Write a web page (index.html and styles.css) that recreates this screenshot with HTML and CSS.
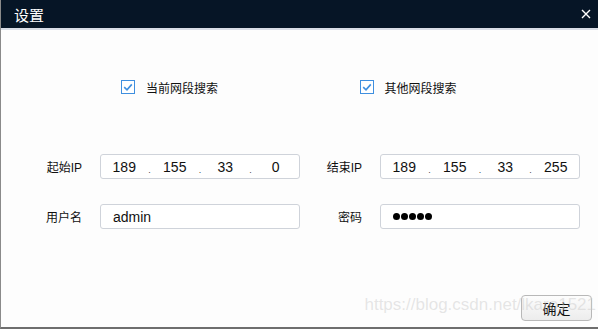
FILE: index.html
```html
<!DOCTYPE html>
<html lang="zh-CN">
<head>
    <meta charset="UTF-8">
    <meta name="viewport" content="width=device-width, initial-scale=1.0">
    <link rel="stylesheet" href="styles.css">
    <title>设置</title>
</head>
<body>
    <div class="dialog">
        <div class="titlebar">
            <span class="title">设置</span>
            <button class="close" aria-label="关闭">
                <svg width="10" height="10" viewBox="0 0 10 10">
                    <path d="M1 1L9 9M9 1L1 9" stroke="#fff" stroke-width="1.4" fill="none"/>
                </svg>
            </button>
        </div>
        <div class="content">
            <div class="checks">
                <label class="check">
                    <svg class="box" width="14" height="14" viewBox="0 0 14 14">
                        <rect x="0.5" y="0.5" width="13" height="13" fill="#fff" stroke="#3f8fdf"/>
                        <path d="M3.2 7.2L6 9.8L10.8 4.4" stroke="#3f8fdf" stroke-width="1.6" fill="none"/>
                    </svg>
                    当前网段搜索
                </label>
                <label class="check">
                    <svg class="box" width="14" height="14" viewBox="0 0 14 14">
                        <rect x="0.5" y="0.5" width="13" height="13" fill="#fff" stroke="#3f8fdf"/>
                        <path d="M3.2 7.2L6 9.8L10.8 4.4" stroke="#3f8fdf" stroke-width="1.6" fill="none"/>
                    </svg>
                    其他网段搜索
                </label>
            </div>

            <div class="row">
                <div class="field">
                    <span class="label">起始IP</span>
                    <div class="input ip">
                        <span class="seg">189</span><span class="dot">.</span>
                        <span class="seg">155</span><span class="dot">.</span>
                        <span class="seg">33</span><span class="dot">.</span>
                        <span class="seg">0</span>
                    </div>
                </div>
                <div class="field">
                    <span class="label">结束IP</span>
                    <div class="input ip">
                        <span class="seg">189</span><span class="dot">.</span>
                        <span class="seg">155</span><span class="dot">.</span>
                        <span class="seg">33</span><span class="dot">.</span>
                        <span class="seg">255</span>
                    </div>
                </div>
            </div>

            <div class="row second">
                <div class="field">
                    <span class="label">用户名</span>
                    <div class="input text">admin</div>
                </div>
                <div class="field">
                    <span class="label">密码</span>
                    <div class="input text">
                        <span class="mask"><i></i><i></i><i></i><i></i><i></i></span>
                    </div>
                </div>
            </div>

            <div class="footer">
                <button class="ok">确定</button>
            </div>
        </div>
        <div class="watermark">https://blog.csdn.net/lkaro1521</div>
    </div>
</body>
</html>
```

FILE: styles.css
```css
body {
    margin: 0;
    font-family: "Liberation Sans", "Noto Sans CJK SC", sans-serif;
    background: #fff;
}

.dialog {
    position: relative;
    width: 598px;
    height: 329px;
    box-sizing: border-box;
    border-left: 1px solid #8a8a8a;
    border-bottom: 2px solid #6e6e6e;
    background: #fdfdfd;
    overflow: hidden;
}

.titlebar {
    height: 28px;
    background: #061526;
    border-bottom: 2px solid #d9dde6;
    display: flex;
    align-items: center;
    justify-content: space-between;
    padding: 0 6px 0 14px;
    margin-left: -1px;
}

.title {
    color: #fff;
    font-family: "Noto Sans CJK SC", sans-serif;
    font-size: 15px;
}

.close {
    background: none;
    border: 0;
    padding: 0;
    width: 10px;
    height: 10px;
    display: flex;
    margin-right: 1px;
}

.content {
    padding-top: 47px;
}

.checks {
    display: flex;
    padding-left: 120px;
    height: 20px;
    align-items: center;
}

.check {
    width: 240px;
    display: flex;
    align-items: center;
    gap: 11px;
    font-family: "Noto Sans CJK SC", sans-serif;
    font-size: 12px;
    color: #111;
}

.row {
    display: flex;
    gap: 17px;
    padding-left: 36px;
    margin-top: 57px;
}

.row.second {
    margin-top: 25px;
}

.field {
    display: flex;
    align-items: center;
    gap: 9px;
}

.label {
    width: 54px;
    box-sizing: border-box;
    padding-right: 9px;
    text-align: right;
    font-family: "Liberation Sans", "Noto Sans CJK SC", sans-serif;
    font-size: 12px;
    color: #111;
}

.input {
    width: 200px;
    height: 25px;
    box-sizing: border-box;
    border: 1px solid #cfd3da;
    border-radius: 3px;
    background: #fff;
    display: flex;
    align-items: center;
    font-size: 14px;
    color: #111;
}

.ip .seg {
    flex: 1;
    text-align: center;
}

.ip .dot {
    width: 4px;
    text-align: center;
    font-size: 9px;
    color: #444;
    align-self: center;
    margin-top: 6px;
}

.text {
    padding-left: 12px;
}

.mask {
    display: flex;
    gap: 1px;
}

.mask i {
    width: 7px;
    height: 7px;
    border-radius: 50%;
    background: #000;
}

.footer {
    display: flex;
    justify-content: flex-end;
    padding-right: 6px;
    margin-top: 66px;
}

.ok {
    width: 71px;
    height: 26px;
    border: 1px solid #b8b8b8;
    border-radius: 4px;
    background: linear-gradient(#fdfdfd, #ececec);
    font-family: "Noto Sans CJK SC", sans-serif;
    font-size: 14px;
    color: #111;
    padding: 0;
}

.watermark {
    position: absolute;
    right: 2px;
    bottom: 12px;
    font-size: 17px;
    color: rgba(200, 200, 200, 0.45);
    pointer-events: none;
    white-space: nowrap;
}
```
